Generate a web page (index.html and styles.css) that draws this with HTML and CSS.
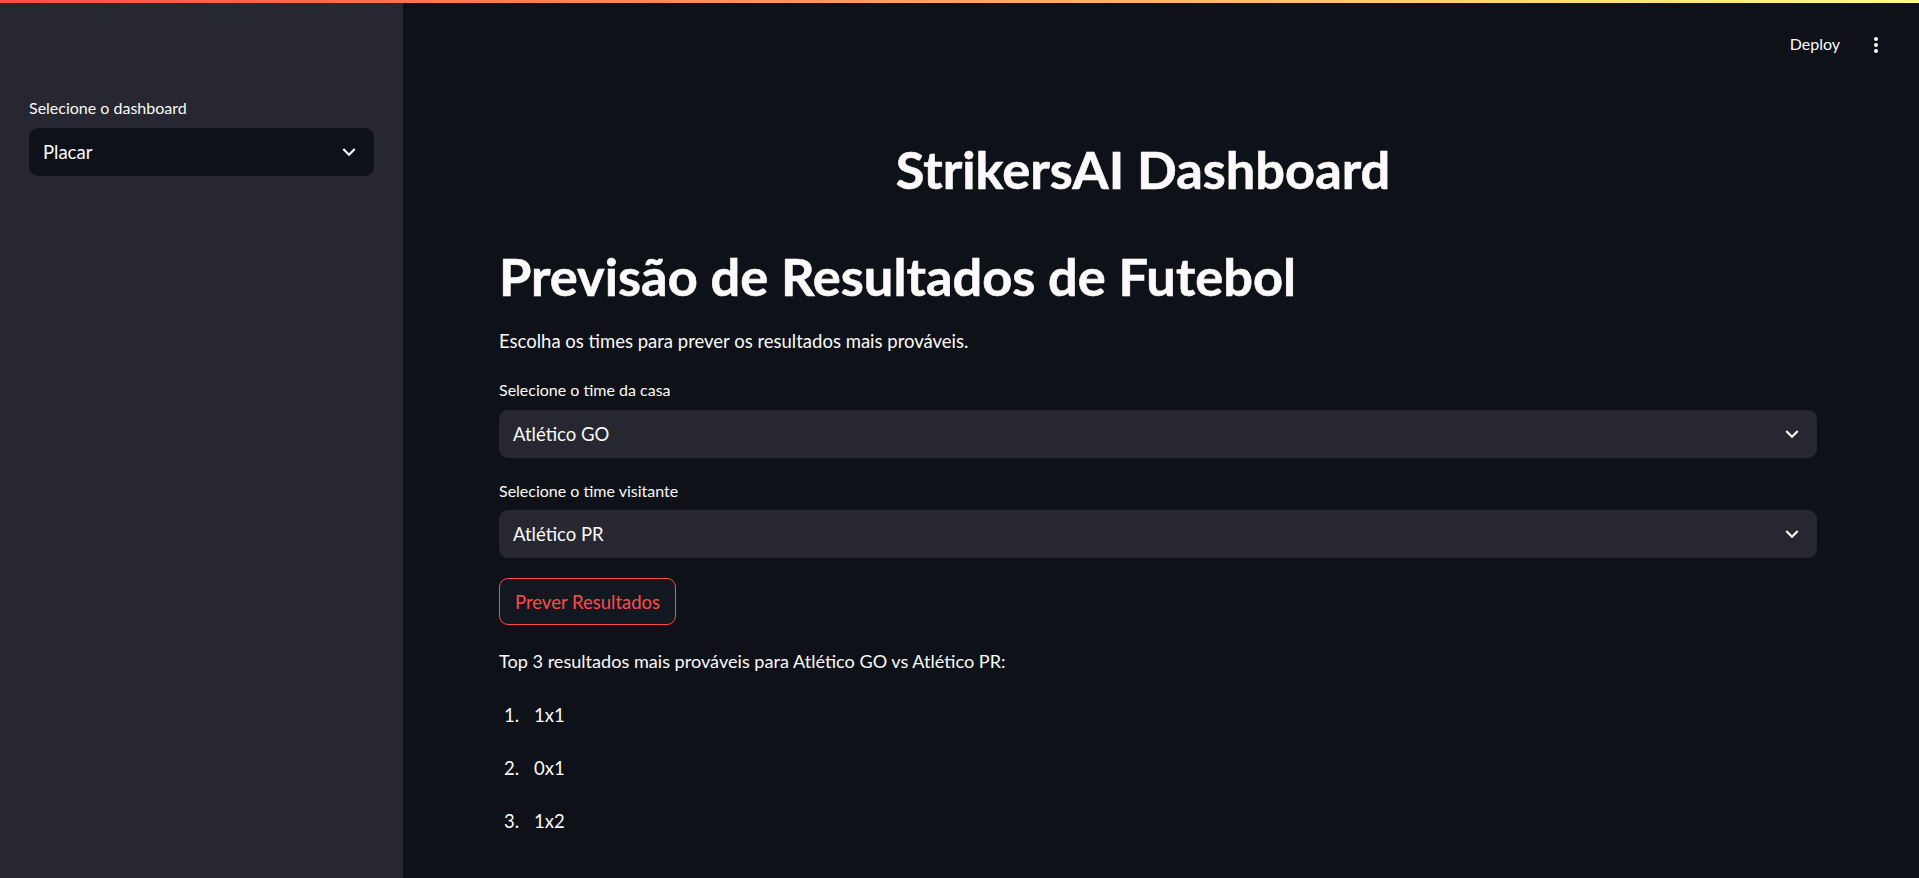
FILE: index.html
```html
<!DOCTYPE html>
<html lang="pt">
<head>
<meta charset="utf-8">
<title>StrikersAI Dashboard</title>
<link rel="stylesheet" href="styles.css">
</head>
<body>
<div class="decoration"></div>
<div class="app">
  <aside class="sidebar">
    <div class="field sidebar-field">
      <label class="label">Selecione o dashboard</label>
      <div class="select select-dark">
        <span class="select-value">Placar</span>
        <svg class="chev" viewBox="0 0 24 24" width="26" height="26"><path d="M7.41 8.59L12 13.17l4.59-4.58L18 10l-6 6-6-6 1.41-1.41z" fill="#fafafa"/></svg>
      </div>
    </div>
  </aside>
  <main class="main">
    <header class="toolbar">
      <span class="deploy">Deploy</span>
      <span class="kebab"><i></i><i></i><i></i></span>
    </header>
    <section class="content">
      <h1 class="title-center">StrikersAI Dashboard</h1>
      <h1 class="title">Previsão de Resultados de Futebol</h1>
      <p class="text intro">Escolha os times para prever os resultados mais prováveis.</p>
      <label class="label label-1">Selecione o time da casa</label>
      <div class="select select-1">
        <span class="select-value">Atlético GO</span>
        <svg class="chev" viewBox="0 0 24 24" width="26" height="26"><path d="M7.41 8.59L12 13.17l4.59-4.58L18 10l-6 6-6-6 1.41-1.41z" fill="#fafafa"/></svg>
      </div>
      <label class="label label-2">Selecione o time visitante</label>
      <div class="select select-2">
        <span class="select-value">Atlético PR</span>
        <svg class="chev" viewBox="0 0 24 24" width="26" height="26"><path d="M7.41 8.59L12 13.17l4.59-4.58L18 10l-6 6-6-6 1.41-1.41z" fill="#fafafa"/></svg>
      </div>
      <button class="btn">Prever Resultados</button>
      <p class="text top3">Top 3 resultados mais prováveis para Atlético GO vs Atlético PR:</p>
      <ol class="results">
        <li><span class="num">1.</span><span>1x1</span></li>
        <li><span class="num">2.</span><span>0x1</span></li>
        <li><span class="num">3.</span><span>1x2</span></li>
      </ol>
    </section>
  </main>
</div>
</body>
</html>
```
FILE: styles.css
```css
* { box-sizing: border-box; }
html, body {
  margin: 0;
  padding: 0;
  height: 100%;
  overflow: hidden;
}
body {
  background: #0e1117;
  color: #fafafa;
  font-family: Lato, "Noto Sans", sans-serif;
}
.decoration {
  position: absolute;
  top: 0;
  left: 0;
  right: 0;
  height: 3px;
  background: linear-gradient(90deg, #ff4b4b, #fffd80);
  z-index: 5;
}
.app {
  display: flex;
  height: 878px;
}
.sidebar {
  width: 403px;
  flex: none;
  background: #262730;
  padding: 97px 29px 0 29px;
}
.field { display: flex; flex-direction: column; }
.label {
  display: block;
  font-size: 16px;
  line-height: 22px;
  height: 22px;
  color: #fafafa;
}
.sidebar-field .label { margin-bottom: 9px; }
.select {
  height: 48px;
  border-radius: 9px;
  background: #262730;
  display: flex;
  align-items: center;
  justify-content: space-between;
  padding: 0 12px 0 14px;
}
.select-dark { background: #0e1117; }
.select-value {
  font-size: 18.5px;
  line-height: 24px;
}
.chev { display: block; }
.main {
  flex: 1;
  display: flex;
  flex-direction: column;
}
.toolbar {
  height: 72px;
  display: flex;
  justify-content: flex-end;
  align-items: center;
  padding: 16px 41px 0 0;
  gap: 34px;
  margin-bottom: -72px;
}
.deploy {
  font-size: 16px;
  line-height: 22px;
}
.kebab {
  display: flex;
  flex-direction: column;
  gap: 2px;
  padding-top: 1px;
}
.kebab i {
  display: block;
  width: 4px;
  height: 4px;
  border-radius: 50%;
  background: #fafafa;
}
.content {
  padding: 137px 102px 0 96px;
  display: flex;
  flex-direction: column;
  align-items: stretch;
}
.title-center, .title {
  margin: 0;
  font-weight: 700;
  font-size: 52.4px;
  line-height: 64px;
  height: 64px;
  -webkit-text-stroke: 0.6px #fafafa;
}
.title-center {
  text-align: center;
  padding-right: 30px;
}
.title { margin-top: 43px; }
.text {
  margin: 0;
  font-size: 18.5px;
  line-height: 30px;
}
.intro { margin-top: 18px; }
.label-1 { margin-top: 23px; }
.select-1 { margin-top: 9px; }
.label-2 { margin-top: 22px; }
.select-2 { margin-top: 8px; }
.btn {
  align-self: flex-start;
  margin-top: 20px;
  height: 47px;
  padding: 0 15px;
  border: 1px solid #ff4b4b;
  border-radius: 9px;
  background: #131720;
  color: #ff4b4b;
  font-family: inherit;
  font-size: 18.5px;
}
.top3 {
  margin-top: 21px;
  font-size: 18.1px;
}
.results {
  list-style: none;
  margin: 24px 0 0 0;
  padding: 0 0 0 5px;
  display: flex;
  flex-direction: column;
  gap: 23px;
}
.results li {
  display: flex;
  font-size: 18.5px;
  line-height: 30px;
}
.results .num { width: 30px; }
```
